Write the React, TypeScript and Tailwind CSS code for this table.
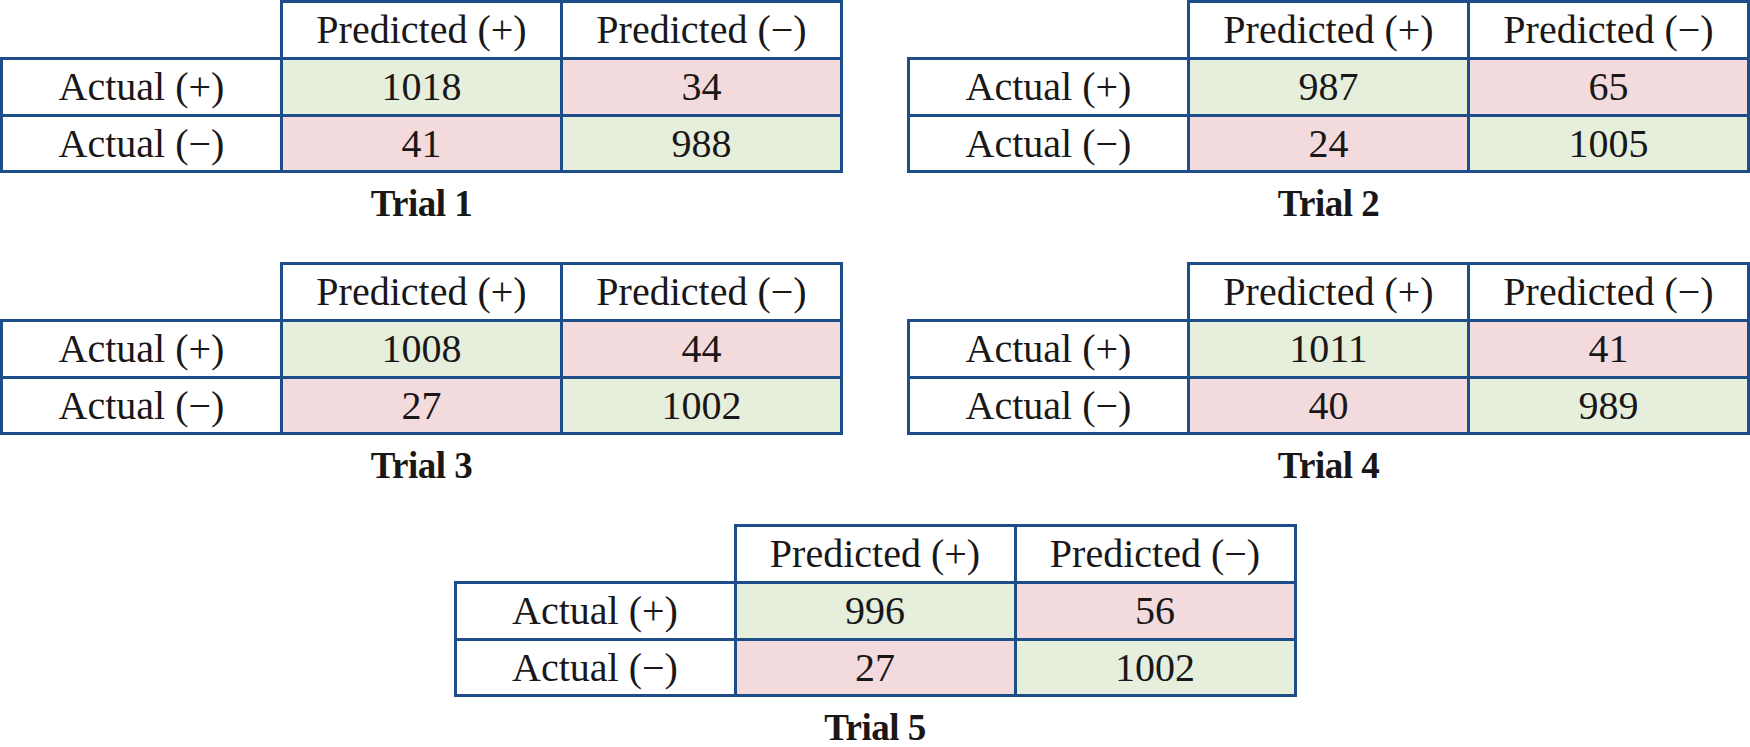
import React from 'react';

type Trial = {
  name: string;
  tp: number;
  fn: number;
  fp: number;
  tn: number;
};

const trials: Trial[] = [
  { name: 'Trial 1', tp: 1018, fn: 34, fp: 41, tn: 988 },
  { name: 'Trial 2', tp: 987, fn: 65, fp: 24, tn: 1005 },
  { name: 'Trial 3', tp: 1008, fn: 44, fp: 27, tn: 1002 },
  { name: 'Trial 4', tp: 1011, fn: 41, fp: 40, tn: 989 },
  { name: 'Trial 5', tp: 996, fn: 56, fp: 27, tn: 1002 },
];

const serif = "font-['Liberation_Serif','Times_New_Roman',serif]";

const Cell: React.FC<{ className?: string; children?: React.ReactNode }> = ({ className = '', children }) => (
  <div className={`flex items-center justify-center border-[#1d4e8a] text-[40px] leading-none text-[#1a1718] ${className}`}>
    {children}
  </div>
);

const ConfusionMatrix: React.FC<{ trial: Trial }> = ({ trial }) => {
  return (
    <div className="flex h-[262px] w-[843px] flex-col">
      <div className="grid grid-cols-[280px_280px_283px] grid-rows-[57px_57px_59px]">
        <div />
        <Cell className="border-l-[3px] border-t-[3px] bg-white">Predicted (+)</Cell>
        <Cell className="border-x-[3px] border-t-[3px] bg-white">Predicted (−)</Cell>

        <Cell className="border-l-[3px] border-t-[3px] bg-white">Actual (+)</Cell>
        <Cell className="border-l-[3px] border-t-[3px] bg-[#e6efdc]">{trial.tp}</Cell>
        <Cell className="border-x-[3px] border-t-[3px] bg-[#f3dbdd]">{trial.fn}</Cell>

        <Cell className="border-y-[3px] border-l-[3px] bg-white">Actual (−)</Cell>
        <Cell className="border-y-[3px] border-l-[3px] bg-[#f3dbdd]">{trial.fp}</Cell>
        <Cell className="border-[3px] bg-[#e6efdc]">{trial.tn}</Cell>
      </div>
      <div className="mt-[12px] text-center text-[37px] font-bold leading-none tracking-[-0.5px] text-[#1a1718]">
        {trial.name}
      </div>
    </div>
  );
};

export default function App() {
  return (
    <div className={`h-[747px] w-[1750px] overflow-hidden bg-white ${serif}`}>
      <div className="flex justify-between">
        <ConfusionMatrix trial={trials[0]} />
        <ConfusionMatrix trial={trials[1]} />
      </div>
      <div className="flex justify-between">
        <ConfusionMatrix trial={trials[2]} />
        <ConfusionMatrix trial={trials[3]} />
      </div>
      <div className="flex justify-center">
        <ConfusionMatrix trial={trials[4]} />
      </div>
    </div>
  );
}
